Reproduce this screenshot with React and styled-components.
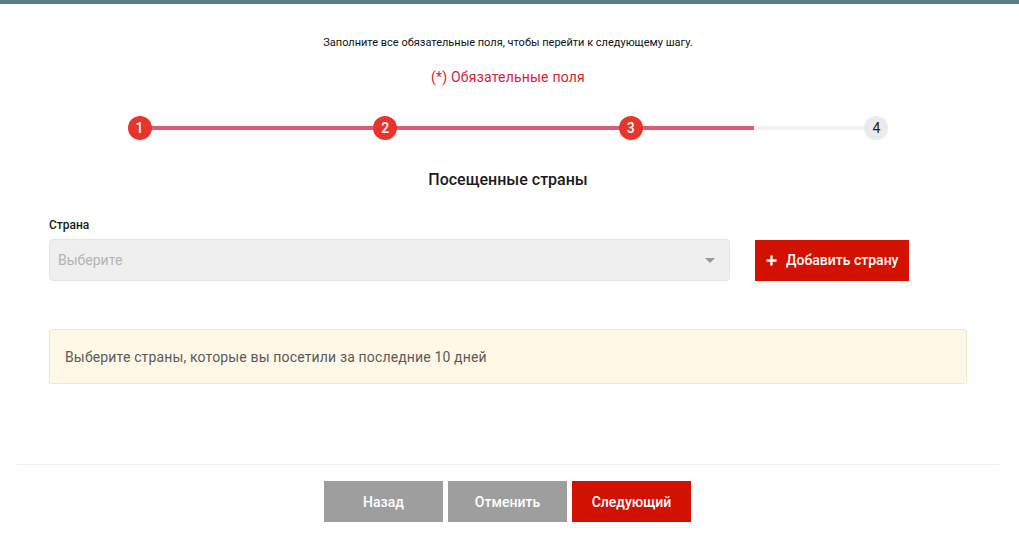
import styled, { createGlobalStyle } from 'styled-components';

const GlobalStyle = createGlobalStyle`
  html, body {
    margin: 0;
    padding: 0;
    background: #fff;
  }
  body {
    font-family: Roboto, "Liberation Sans", sans-serif;
    color: #222;
  }
`;

const steps = [1, 2, 3, 4];
const current = 3;

export default function App() {
  return (
    <>
      <GlobalStyle />
      <TopBar />
      <Page>
        <Content>
          <Hint>Заполните все обязательные поля, чтобы перейти к следующему шагу.</Hint>
          <Required>(*) Обязательные поля</Required>
          <Stepper>
            <Track>
              <Progress style={{ width: `${((current - 0.5) / (steps.length - 1)) * 100}%` }} />
            </Track>
            {steps.map((s) => (
              <Dot key={s} done={s <= current}>
                {s}
              </Dot>
            ))}
          </Stepper>
          <Title>Посещенные страны</Title>
          <Label>Страна</Label>
          <FieldRow>
            <Select>
              <Placeholder>Выберите</Placeholder>
              <Caret />
            </Select>
            <AddButton>
              <PlusIcon viewBox="0 0 12 12">
                <path d="M6 0.5v11M0.5 6h11" stroke="#fff" strokeWidth="2.6" />
              </PlusIcon>
              Добавить страну
            </AddButton>
          </FieldRow>
          <Alert>Выберите страны, которые вы посетили за последние 10 дней</Alert>
        </Content>
        <Footer>
          <ActionButton variant="grey">Назад</ActionButton>
          <ActionButton variant="grey">Отменить</ActionButton>
          <ActionButton variant="red">Следующий</ActionButton>
        </Footer>
      </Page>
    </>
  );
}

const TopBar = styled.div`
  height: 4px;
  background: #5e7d88;
`;

const Page = styled.div`
  margin: 0 20px 0 17px;
`;

const Content = styled.div`
  padding: 0 32px 80px;
  display: flex;
  flex-direction: column;
`;

const Hint = styled.p`
  margin: 32px 0 0;
  font-size: 11px;
  line-height: 14px;
  text-align: center;
  color: #111;
`;

const Required = styled.p`
  margin: 18px 0 0;
  font-size: 14px;
  line-height: 18px;
  text-align: center;
  color: #d8232f;
  letter-spacing: 0.2px;
`;

const Stepper = styled.div`
  position: relative;
  margin: 30px auto 0;
  width: 761px;
  display: flex;
  justify-content: space-between;
  align-items: center;
  height: 24px;
`;

const Track = styled.div`
  position: absolute;
  left: 12px;
  right: 12px;
  top: 10px;
  height: 4px;
  background: #f2f2f2;
`;

const Progress = styled.div`
  height: 100%;
  background: #de5a72;
`;

const Dot = styled.span`
  position: relative;
  z-index: 1;
  width: 24px;
  height: 24px;
  border-radius: 50%;
  display: flex;
  align-items: center;
  justify-content: center;
  font-size: 14px;
  font-weight: ${(p) => (p.done ? 500 : 400)};
  background: ${(p) => (p.done ? '#e8352b' : '#ebebeb')};
  color: ${(p) => (p.done ? '#fff' : '#222')};
`;

const Title = styled.h2`
  margin: 29px 0 0;
  font-size: 16px;
  line-height: 22px;
  font-weight: 500;
  text-align: center;
  color: #1a1a1a;
`;

const Label = styled.label`
  margin: 26px 0 0;
  font-size: 12px;
  line-height: 16px;
  font-weight: 500;
  color: #1a1a1a;
`;

const FieldRow = styled.div`
  margin-top: 6px;
  display: flex;
  align-items: center;
  gap: 25px;
`;

const Select = styled.div`
  width: 681px;
  height: 42px;
  box-sizing: border-box;
  border: 1px solid #e4e4e4;
  border-radius: 4px;
  background: #efefef;
  display: flex;
  align-items: center;
  justify-content: space-between;
  padding: 0 14px 0 8px;
`;

const Placeholder = styled.span`
  font-size: 14px;
  color: #b3b3b3;
`;

const Caret = styled.span`
  width: 0;
  height: 0;
  border-left: 5px solid transparent;
  border-right: 5px solid transparent;
  border-top: 5px solid #999;
`;

const AddButton = styled.button`
  height: 41px;
  padding: 0 11px;
  border: none;
  background: #d31100;
  color: #fff;
  font-family: Roboto, "Liberation Sans", sans-serif;
  font-size: 14px;
  font-weight: 500;
  display: flex;
  align-items: center;
  gap: 9px;
  cursor: pointer;
`;

const PlusIcon = styled.svg`
  width: 11px;
  height: 11px;
`;

const Alert = styled.div`
  margin-top: 48px;
  height: 55px;
  box-sizing: border-box;
  border: 1px solid #f4e7c7;
  border-radius: 3px;
  background: #fff8e6;
  padding: 0 15px;
  display: flex;
  align-items: center;
  font-size: 14px;
  letter-spacing: 0.15px;
  color: #5a5a5a;
`;

const Footer = styled.div`
  border-top: 1px solid #eeeeee;
  padding: 16px 1px 0 0;
  display: flex;
  justify-content: center;
  gap: 5px;
`;

const ActionButton = styled.button`
  width: 119px;
  height: 41px;
  border: none;
  font-family: Roboto, "Liberation Sans", sans-serif;
  font-size: 14px;
  font-weight: 500;
  color: #fff;
  background: ${(p) => (p.variant === 'red' ? '#d31100' : '#9e9e9e')};
  cursor: pointer;
`;
